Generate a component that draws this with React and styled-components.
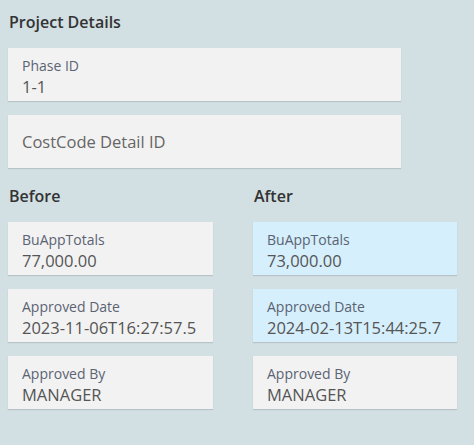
import React from "react";
import styled, { createGlobalStyle } from "styled-components";

const Global = createGlobalStyle`
  html, body { margin: 0; padding: 0; background: #d2dfe3; }
  body { font-family: "Open Sans", "Noto Sans", sans-serif; }
`;

const Page = styled.div`
  padding: 8px 17px 20px 8px;
  display: flex;
  flex-direction: column;
`;

const Heading = styled.h2`
  margin: 0;
  font-size: 16px;
  font-weight: 600;
  color: #333;
  height: 28px;
  line-height: 28px;
  padding-left: 1px;
`;

const Stack = styled.div`
  display: flex;
  flex-direction: column;
  gap: 14px;
  margin-top: 12px;
  width: ${(p) => p.$width || "auto"};
`;

const Card = styled.div`
  background: ${(p) => (p.$changed ? "#d5effc" : "#f2f2f2")};
  box-shadow: 0 1px 1px rgba(0, 0, 0, 0.12);
  height: 53px;
  box-sizing: border-box;
  padding: 8px 14px 0;
  display: flex;
  flex-direction: column;
  justify-content: ${(p) => (p.$single ? "center" : "flex-start")};
  ${(p) => (p.$single ? "padding: 0 14px;" : "")}
`;

const Label = styled.div`
  font-size: 14px;
  line-height: 19px;
  color: #5b6372;
`;

const Value = styled.div`
  font-size: 16.5px;
  line-height: 23px;
  color: #555;
`;

const Placeholder = styled.div`
  font-size: 16.5px;
  line-height: 23px;
  color: #666;
`;

const Columns = styled.div`
  display: grid;
  grid-template-columns: 245px 204px;
  margin-top: 14px;
`;

const Column = styled.div`
  display: flex;
  flex-direction: column;
`;

function Field({ label, value, changed }) {
  return (
    <Card $changed={changed}>
      <Label>{label}</Label>
      <Value>{value}</Value>
    </Card>
  );
}

export default function App() {
  const before = [
    ["BuAppTotals", "77,000.00"],
    ["Approved Date", "2023-11-06T16:27:57.5"],
    ["Approved By", "MANAGER"],
  ];
  const after = [
    ["BuAppTotals", "73,000.00", true],
    ["Approved Date", "2024-02-13T15:44:25.7", true],
    ["Approved By", "MANAGER", false],
  ];
  return (
    <>
      <Global />
      <Page>
        <Heading>Project Details</Heading>
        <Stack $width="393px">
          <Field label="Phase ID" value="1-1" />
          <Card $single>
            <Placeholder>CostCode Detail ID</Placeholder>
          </Card>
        </Stack>
        <Columns>
          <Column>
            <Heading>Before</Heading>
            <Stack $width="205px">
              {before.map(([l, v]) => (
                <Field key={l} label={l} value={v} />
              ))}
            </Stack>
          </Column>
          <Column>
            <Heading>After</Heading>
            <Stack $width="204px">
              {after.map(([l, v, c]) => (
                <Field key={l} label={l} value={v} changed={c} />
              ))}
            </Stack>
          </Column>
        </Columns>
      </Page>
    </>
  );
}
